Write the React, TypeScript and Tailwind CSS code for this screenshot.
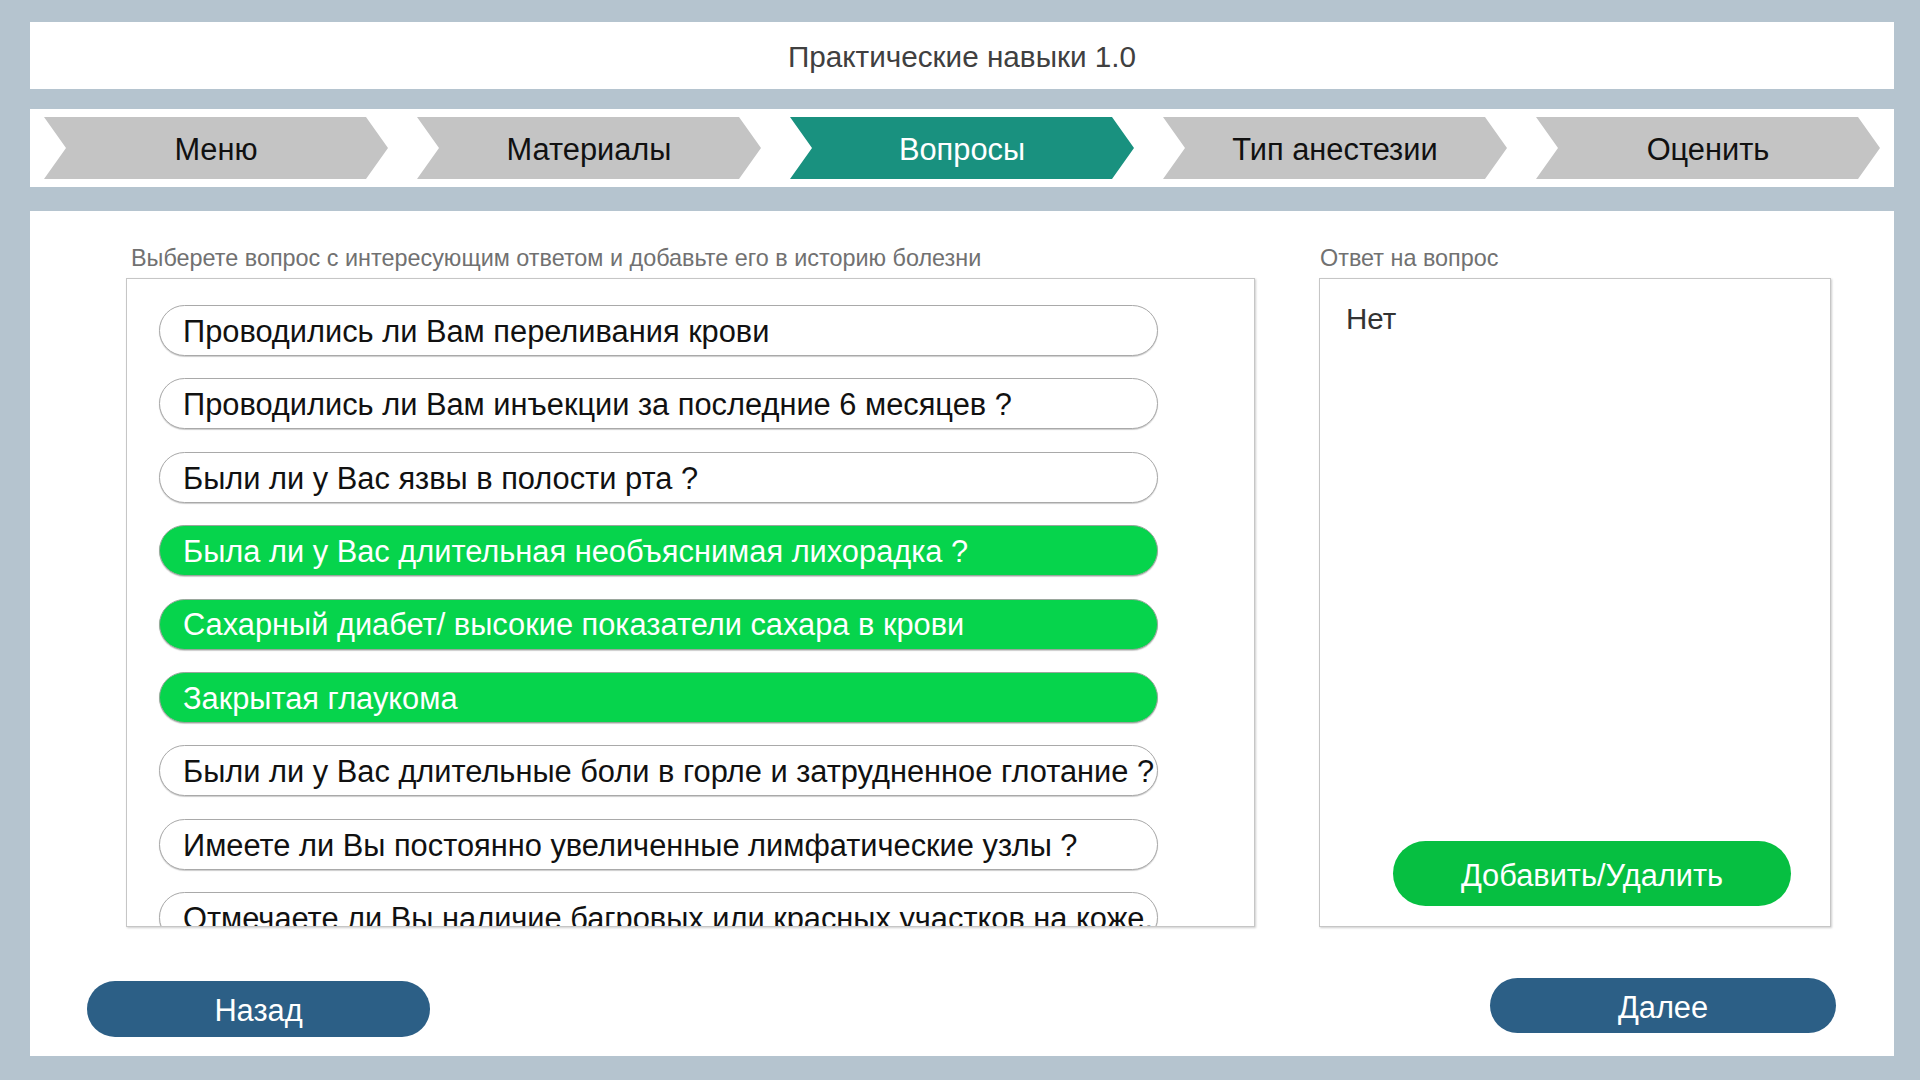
const steps = [
  { label: "Меню", active: false },
  { label: "Материалы", active: false },
  { label: "Вопросы", active: true },
  { label: "Тип анестезии", active: false },
  { label: "Оценить", active: false },
];

const questions = [
  { text: "Проводились ли Вам переливания крови", picked: false },
  { text: "Проводились ли Вам инъекции за последние 6 месяцев ?", picked: false },
  { text: "Были ли у Вас язвы в полости рта ?", picked: false },
  { text: "Была ли у Вас длительная необъяснимая лихорадка ?", picked: true },
  { text: "Сахарный диабет/ высокие показатели сахара в крови", picked: true },
  { text: "Закрытая глаукома", picked: true },
  { text: "Были ли у Вас длительные боли в горле и затрудненное глотание ?", picked: false },
  { text: "Имеете ли Вы постоянно увеличенные лимфатические узлы ?", picked: false },
  { text: "Отмечаете ли Вы наличие багровых или красных участков на коже.", picked: false },
];

export default function App() {
  return (
    <div className="flex h-[1080px] w-full flex-col bg-[#b5c4cf] pl-[30px] pr-[26px] pt-[22px] font-['Liberation_Sans',Arial,sans-serif]">
      <header className="flex h-[67px] items-center justify-center bg-white pt-[4px] text-[29.7px] text-[#404040]">
        Практические навыки 1.0
      </header>

      <nav className="mt-[20px] flex h-[78px] items-center gap-[29px] bg-white px-[14px]">
        {steps.map((s) => (
          <div
            key={s.label}
            className={
              "flex h-[62px] w-[344px] items-center justify-center pt-[4px] text-[30.8px] [clip-path:polygon(0_0,calc(100%_-_22px)_0,100%_50%,calc(100%_-_22px)_100%,0_100%,22px_50%)] " +
              (s.active ? "bg-[#19917f] text-white" : "bg-[#c4c4c4] text-[#111]")
            }
          >
            {s.label}
          </div>
        ))}
      </nav>

      <main className="mt-[24px] flex h-[845px] flex-col bg-white pt-[34px]">
        <div className="flex gap-[64px] pl-[96px]">
          <section className="w-[1129px]">
            <p className="pl-[5px] text-[23.4px] leading-[26px] text-[#717171]">
              Выберете вопрос с интересующим ответом и добавьте его в историю болезни
            </p>
            <div className="mt-[7px] h-[649px] overflow-hidden border border-[#c6c6c6] pl-[32px] pt-[26px] shadow-[1px_1px_2px_rgba(0,0,0,0.2)]">
              <ul className="flex w-[999px] flex-col gap-[22.4px]">
                {questions.map((q) => (
                  <li
                    key={q.text}
                    className={
                      "flex h-[51px] shrink-0 items-center whitespace-nowrap rounded-full border pl-[23px] pt-[3px] text-[30.8px] shadow-[0_1px_1px_rgba(0,0,0,0.2)] " +
                      (q.picked
                        ? "border-[#9aa69c] bg-[#06d44c] text-white"
                        : "border-[#a9a9a9] bg-white text-[#111]")
                    }
                  >
                    {q.text}
                  </li>
                ))}
              </ul>
            </div>
          </section>

          <section className="w-[512px]">
            <p className="pl-[1px] text-[23.4px] leading-[26px] text-[#717171]">Ответ на вопрос</p>
            <div className="mt-[7px] flex h-[649px] flex-col border border-[#c6c6c6] shadow-[1px_1px_2px_rgba(0,0,0,0.2)]">
              <p className="pl-[26px] pt-[22px] text-[29.5px] leading-[36px] text-[#333]">Нет</p>
              <button className="mb-[20px] ml-[73px] mt-auto flex h-[65px] w-[398px] items-center justify-center rounded-full bg-[#06bf41] pt-[5px] text-[30.8px] text-white">
                Добавить/Удалить
              </button>
            </div>
          </section>
        </div>

        <div className="mt-[51px] flex items-start justify-between pl-[57px] pr-[58px]">
          <button className="mt-[3px] flex h-[56px] w-[343px] items-center justify-center rounded-full bg-[#2c5f86] pt-[4px] text-[30.8px] text-white">
            Назад
          </button>
          <button className="flex h-[55px] w-[346px] items-center justify-center rounded-full bg-[#2c5f86] pt-[5px] text-[30.8px] text-white">
            Далее
          </button>
        </div>
      </main>
    </div>
  );
}
